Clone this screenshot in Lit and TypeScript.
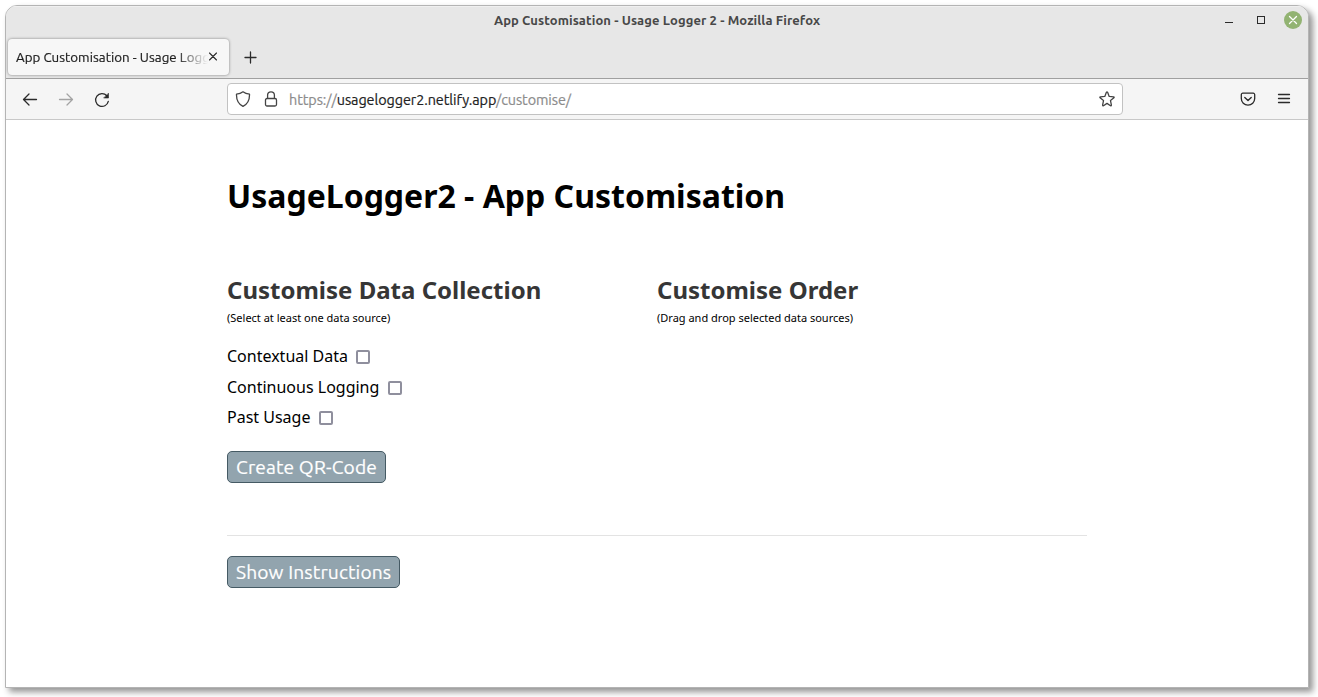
import { LitElement, html, css } from "lit";
import { customElement } from "lit/decorators.js";

const sources = ["Contextual Data", "Continuous Logging", "Past Usage"];

@customElement("app-root")
export class AppRoot extends LitElement {
  static styles = css`
    * { box-sizing: border-box; }
    :host {
      display: block;
      height: 697px;
      padding: 5px 9px 9px 5px;
      background: #fff;
      overflow: hidden;
      font-family: "Noto Sans", sans-serif;
      color: #000;
    }
    svg { display: block; flex: none; fill: none; stroke: #2b2b2b; stroke-width: 1.3; stroke-linecap: round; stroke-linejoin: round; }
    .window {
      height: 683px;
      border: 1px solid #b4b4b4;
      border-radius: 12px 12px 0 0;
      box-shadow: 4px 4px 6px rgba(0, 0, 0, 0.42);
      background: #fff;
      overflow: hidden;
    }
    .chrome { font-family: Ubuntu, "Noto Sans", sans-serif; }
    .titlebar { display: grid; grid-template-columns: 1fr auto 1fr; align-items: center; height: 28px; background: #e7e7e7; box-shadow: inset 0 1px #f0f0f0; }
    .title { grid-column: 2; font-size: 13px; font-weight: 600; color: #484848; letter-spacing: 0.09px; white-space: nowrap; }
    .controls { justify-self: end; display: flex; }
    .tabs { display: flex; align-items: center; height: 45px; padding: 0 0 0 2px; background: #e7e7e7; border-bottom: 1px solid #a0a0a0; }
    .tab { display: flex; align-items: center; width: 221px; height: 36px; padding: 2px 0 0 8px; margin-top: 1px; border-radius: 4px; background: #f7f7f7; box-shadow: 0 0 3px rgba(0, 0, 0, 0.45); }
    .tabtext { width: 192px; overflow: hidden; white-space: nowrap; font-size: 13.33px; letter-spacing: 0.04px; -webkit-text-stroke: 0.2px #1d1d1d; color: #1d1d1d; -webkit-mask-image: linear-gradient(to right, #000 160px, transparent 192px); }
    .close { margin-top: -1px; }
    .plus { margin: 1px 0 0 14px; }
    .toolbar { display: flex; align-items: center; height: 41px; background: #f5f5f5; border-bottom: 1px solid #c8c8c8; padding: 0 16px 0 16px; }
    .nav { display: flex; gap: 20px; width: 205px; padding-top: 1px; }
    .dim { opacity: 0.4; }
    .url { display: flex; align-items: center; width: 896px; height: 32px; padding: 0 7px; background: #fff; border: 1px solid #c2c2c2; border-radius: 4px; }
    .lock { margin-left: 12px; }
    .address { flex: 1; margin-left: 10px; padding-top: 2px; font-size: 14.4px; letter-spacing: -0.07px; -webkit-text-stroke: 0.2px currentColor; color: #8c8c8c; white-space: nowrap; }
    .host { color: #222; }
    .tools { display: flex; gap: 20px; margin-left: auto; }
    .page { width: 860px; margin-left: 221px; }
    h1 { margin: 0; padding-top: 54px; font-size: 32px; line-height: 44px; font-weight: 700; white-space: nowrap; }
    .columns { display: grid; grid-template-columns: 430px 430px; margin-top: 55px; }
    h2 { margin: 0; font-size: 24px; line-height: 33px; font-weight: 700; color: #363636; }
    .hint { margin: 4px 0 0; font-size: 11px; line-height: 16px; }
    .options { margin-top: 15px; }
    .option { display: flex; align-items: center; height: 30.5px; font-size: 16px; }
    .box { width: 14px; height: 14px; margin: 2px 0 0 8.5px; border: 2px solid #8f8f9d; border-radius: 2px; }
    .button { display: block; height: 32px; padding: 0 8px; border: 1px solid #455a64; border-radius: 5px; background: #92a4ae; color: #fff; font: 400 19.2px/30px Ubuntu, "Noto Sans", sans-serif; letter-spacing: 0.13px; -webkit-text-stroke: 0.2px #fff; white-space: nowrap; }
    .create { margin-top: 18px; }
    .rule { height: 1px; margin: 52px 0 20px; background: #e3e3e3; }
  `;

  render() {
    return html`
      <div class="window">
        <div class="chrome">
          <div class="titlebar">
            <div class="title">App Customisation - Usage Logger 2 - Mozilla Firefox</div>
            <div class="controls">
              <svg width="90" height="28" viewBox="1218 6 90 28">
                <path d="M1225 22.5h8" stroke-width="1" stroke-linecap="butt" />
                <rect x="1257.5" y="16.5" width="7" height="7" stroke-width="1" stroke-linejoin="miter" />
                <circle cx="1293" cy="20" r="9" fill="#92b372" stroke="none" />
                <path d="m1289.5 16.5 7 7m0-7-7 7" stroke="#fff" />
              </svg>
            </div>
          </div>
          <div class="tabs">
            <div class="tab">
              <div class="tabtext">App Customisation - Usage Logger 2</div>
              <svg class="close" width="12" height="12" viewBox="0 0 12 12"><path d="m1.500 2 7 7m0-7-7 7" stroke-width="1.1" /></svg>
            </div>
            <svg class="plus" width="16" height="16" viewBox="0 0 16 16"><path d="M2 8.5h11M7.500 3v11" /></svg>
          </div>
          <div class="toolbar">
            <div class="nav">
              <svg width="16" height="16" viewBox="0 0 16 16"><path d="M14.500 7.500H1.500M7 2 1.500 7.500 7 13" /></svg>
              <svg class="dim" width="16" height="16" viewBox="0 0 16 16"><path d="M1.500 7.500h13M9 2 14.500 7.500 9 13" /></svg>
              <svg width="16" height="16" viewBox="0 0 16 16"><path d="M14.300 9.400A6.400 6.400 0 1 1 12.800 3.700" /><path d="M14.500 1.500v4.500H10z" fill="#2b2b2b" stroke-width=".6" /></svg>
            </div>
            <div class="url">
              <svg width="16" height="16" viewBox="0 0 16 16"><path d="M8 .8c1.700 1.300 4 2.100 6.500 2.300.2 5.200-1.400 9.600-6.500 12.200C2.900 12.700 1.300 8.300 1.500 3.100 4 2.900 6.300 2.100 8 .8z" stroke="#444" /></svg>
              <svg class="lock" width="16" height="16" viewBox="0 0 16 16"><g stroke="#444"><rect x="2.500" y="7.500" width="11" height="7.500" rx="1.500" /><path d="M4.600 7.300V4.300a3.400 3.400 0 0 1 6.800 0v3" /></g></svg>
              <div class="address">https://<span class="host">usagelogger2.netlify.app</span>/customise/</div>
              <svg width="16" height="16" viewBox="0 0 16 16"><path d="M7.400 1.300q.6-1 1.200 0L10.200 5.400l4.400.4q1 .2.300 1L11.500 9.600l.9 4.500q0 1-.9.600L8 12.400l-3.500 2.300q-.9.400-.9-.6l.9-4.500L1.100 6.800q-.7-.8.3-1l4.400-.4z" stroke="#444" /></svg>
            </div>
            <div class="tools">
              <svg width="16" height="16" viewBox="0 0 16 16"><path d="M2.800 2.200h10.400a1.500 1.500 0 0 1 1.500 1.500V7.500a6.700 6.700 0 0 1-13.400 0V3.700a1.500 1.500 0 0 1 1.500-1.500z" /><path d="M4.800 6.600 8 9.600l3.200-3" stroke-width="1.400" /></svg>
              <svg width="16" height="16" viewBox="0 0 16 16"><path d="M2.500 3.500h11M2.500 7.500h11M2.500 11.500h11" /></svg>
            </div>
          </div>
        </div>
        <div class="page">
          <h1>UsageLogger2 - App Customisation</h1>
          <div class="columns">
            <div>
              <h2>Customise Data Collection</h2>
              <p class="hint">(Select at least one data source)</p>
              <div class="options">
                ${sources.map((s) => html`<div class="option"><span>${s}</span><span class="box"></span></div>`)}
              </div>
              <button class="button create">Create QR-Code</button>
            </div>
            <div>
              <h2>Customise Order</h2>
              <p class="hint">(Drag and drop selected data sources)</p>
            </div>
          </div>
          <div class="rule"></div>
          <button class="button">Show Instructions</button>
        </div>
      </div>
    `;
  }
}
